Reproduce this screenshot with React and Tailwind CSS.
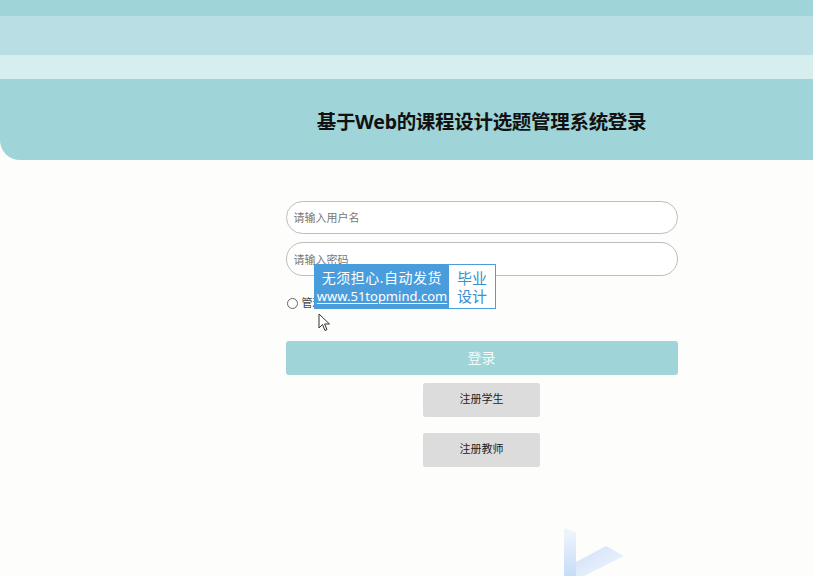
import React from "react";

const font = { fontFamily: '"Noto Sans", "Noto Sans CJK SC", sans-serif' };

function Watermark() {
  return (
    <div className="absolute left-[314px] top-[264px] flex h-[45px] border border-[#4a9ddc] bg-[#4a9ddc]">
      <div className="flex w-[134px] flex-col items-center justify-center leading-none text-white">
        <span className="text-[14px] tracking-[0.5px]">无须担心.自动发货</span>
        <span className="mt-[5px] text-[13px] underline underline-offset-2">www.51topmind.com</span>
      </div>
      <div className="flex w-[46px] flex-col items-center justify-center bg-white text-[15px] leading-[18px] text-[#3a8fd3]">
        <span>毕业</span>
        <span>设计</span>
      </div>
    </div>
  );
}

function Cursor() {
  return (
    <svg className="absolute left-[318px] top-[313px]" width="13" height="19" viewBox="0 0 13 19">
      <path d="M1 1 L1 15 L4.5 11.5 L7 17.5 L9 16.6 L6.6 11 L11.5 11 Z" fill="#fff" stroke="#333" strokeWidth="1" strokeLinejoin="round" />
    </svg>
  );
}

function Logo() {
  return (
    <svg className="absolute left-[562px] top-[522px]" width="66" height="54" viewBox="0 0 66 54">
      <defs>
        <linearGradient id="lg1" x1="0" y1="0" x2="0" y2="1">
          <stop offset="0" stopColor="#f1f6fd" />
          <stop offset="1" stopColor="#c6dcf7" />
        </linearGradient>
        <linearGradient id="lg2" x1="0" y1="0" x2="1" y2="1">
          <stop offset="0" stopColor="#cfe0f8" />
          <stop offset="1" stopColor="#f3f7fd" />
        </linearGradient>
      </defs>
      <path d="M2 6 L14 10 L14 54 L2 54 Z" fill="url(#lg1)" />
      <path d="M14 40 L44 24 L62 34 L22 54 L14 54 Z" fill="url(#lg2)" />
    </svg>
  );
}

export default function App() {
  return (
    <div className="relative h-[576px] w-[813px] overflow-hidden bg-[#fdfdfb]" style={font}>
      {/* Header */}
      <div className="flex flex-col">
        <div className="h-[16px] bg-[#9fd4d8]" />
        <div className="h-[39px] bg-[#b9dfe4]" />
        <div className="h-[24px] bg-[#d7eeef]" />
        <div className="flex h-[81px] items-center justify-center rounded-bl-[20px] bg-[#9fd4d8] pl-[150px] pt-[4px]">
          <h1 className="text-[19.5px] font-bold tracking-[-0.3px] text-[#111]">基于Web的课程设计选题管理系统登录</h1>
        </div>
      </div>

      {/* Form */}
      <div className="mx-auto mt-[41px] flex w-[392px] translate-x-[75px] flex-col">
        <input
          className="h-[33px] w-full rounded-full border border-[#bdbdbd] bg-white px-[7px] text-[11px] text-[#333] outline-none placeholder:text-[#777]"
          placeholder="请输入用户名"
        />
        <input
          className="mt-[8px] h-[34px] w-full rounded-full border border-[#bdbdbd] bg-white px-[7px] text-[11px] text-[#333] outline-none placeholder:text-[#777]"
          placeholder="请输入密码"
          type="password"
        />
        <div className="mt-[19px] flex items-center gap-[4px] pl-[1px] text-[11px] text-[#444]">
          <span className="h-[11px] w-[11px] rounded-full border border-[#666]" />
          <span>管理员</span>
        </div>
        <button className="mt-[29px] h-[34px] w-full rounded-[3px] bg-[#9fd4d8] text-[14px] text-[#f4fbfb]">登录</button>
        <button className="mx-auto mt-[8px] h-[34px] w-[117px] rounded-[2px] bg-[#dcdcdc] text-[11px] text-[#222]">注册学生</button>
        <button className="mx-auto mt-[16px] h-[34px] w-[117px] rounded-[2px] bg-[#dcdcdc] text-[11px] text-[#222]">注册教师</button>
      </div>

      <Watermark />
      <Cursor />
      <Logo />
    </div>
  );
}
